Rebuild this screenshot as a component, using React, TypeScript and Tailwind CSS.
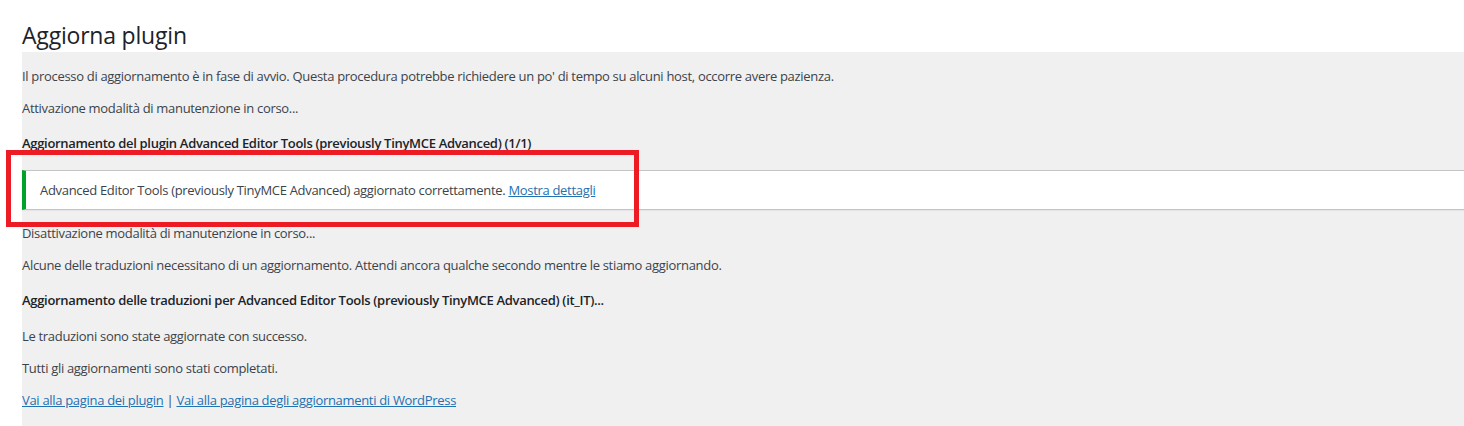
export default function App() {
  const font = { fontFamily: '"Open Sans", "Noto Sans", sans-serif' };

  return (
    <div className="relative w-[1464px] h-[426px] bg-white overflow-hidden" style={font}>
      <div className="flex flex-col h-full pl-[22px]">
        <h1 className="pt-[20px] h-[52px] text-[23px] leading-[30px] font-normal tracking-[-0.2px] text-[#1d2327]">
          Aggiorna plugin
        </h1>

        <div className="flex-1 bg-[#f0f0f1] text-[13px] leading-[19px] tracking-[-0.31px] text-[#3c434a]">
          <p className="mt-[15px]">
            Il processo di aggiornamento è in fase di avvio. Questa procedura potrebbe richiedere un po' di tempo su alcuni host, occorre avere pazienza.
          </p>
          <p className="mt-[13px]">Attivazione modalità di manutenzione in corso...</p>
          <h2 className="mt-[16px] font-semibold text-[#1d2327]">
            Aggiornamento del plugin Advanced Editor Tools (previously TinyMCE Advanced) (1/1)
          </h2>

          {/* notice */}
          <div className="mt-[17px] h-[40px] flex items-center bg-white border-y border-[#c3c4c7] border-l-4 border-l-[#00a32a] pl-[14px] shadow-[0_1px_1px_rgba(0,0,0,0.04)]">
            <p>
              Advanced Editor Tools (previously TinyMCE Advanced) aggiornato correttamente.{" "}
              <a href="#" className="text-[#2271b1] underline">Mostra dettagli</a>
            </p>
          </div>

          <p className="mt-[14px]">Disattivazione modalità di manutenzione in corso...</p>
          <p className="mt-[13px]">
            Alcune delle traduzioni necessitano di un aggiornamento. Attendi ancora qualche secondo mentre le stiamo aggiornando.
          </p>
          <h2 className="mt-[16px] font-semibold text-[#1d2327]">
            Aggiornamento delle traduzioni per Advanced Editor Tools (previously TinyMCE Advanced) (it_IT)...
          </h2>
          <p className="mt-[17px]">Le traduzioni sono state aggiornate con successo.</p>
          <p className="mt-[13px]">Tutti gli aggiornamenti sono stati completati.</p>
          <p className="mt-[13px]">
            <a href="#" className="text-[#2271b1] underline">Vai alla pagina dei plugin</a>
            {" | "}
            <a href="#" className="text-[#2271b1] underline">Vai alla pagina degli aggiornamenti di WordPress</a>
          </p>
        </div>
      </div>

      {/* red highlight annotation */}
      <div className="absolute left-[6px] top-[150px] w-[633px] h-[77px] border-[5px] border-[#ed1c24] pointer-events-none" />
    </div>
  );
}
